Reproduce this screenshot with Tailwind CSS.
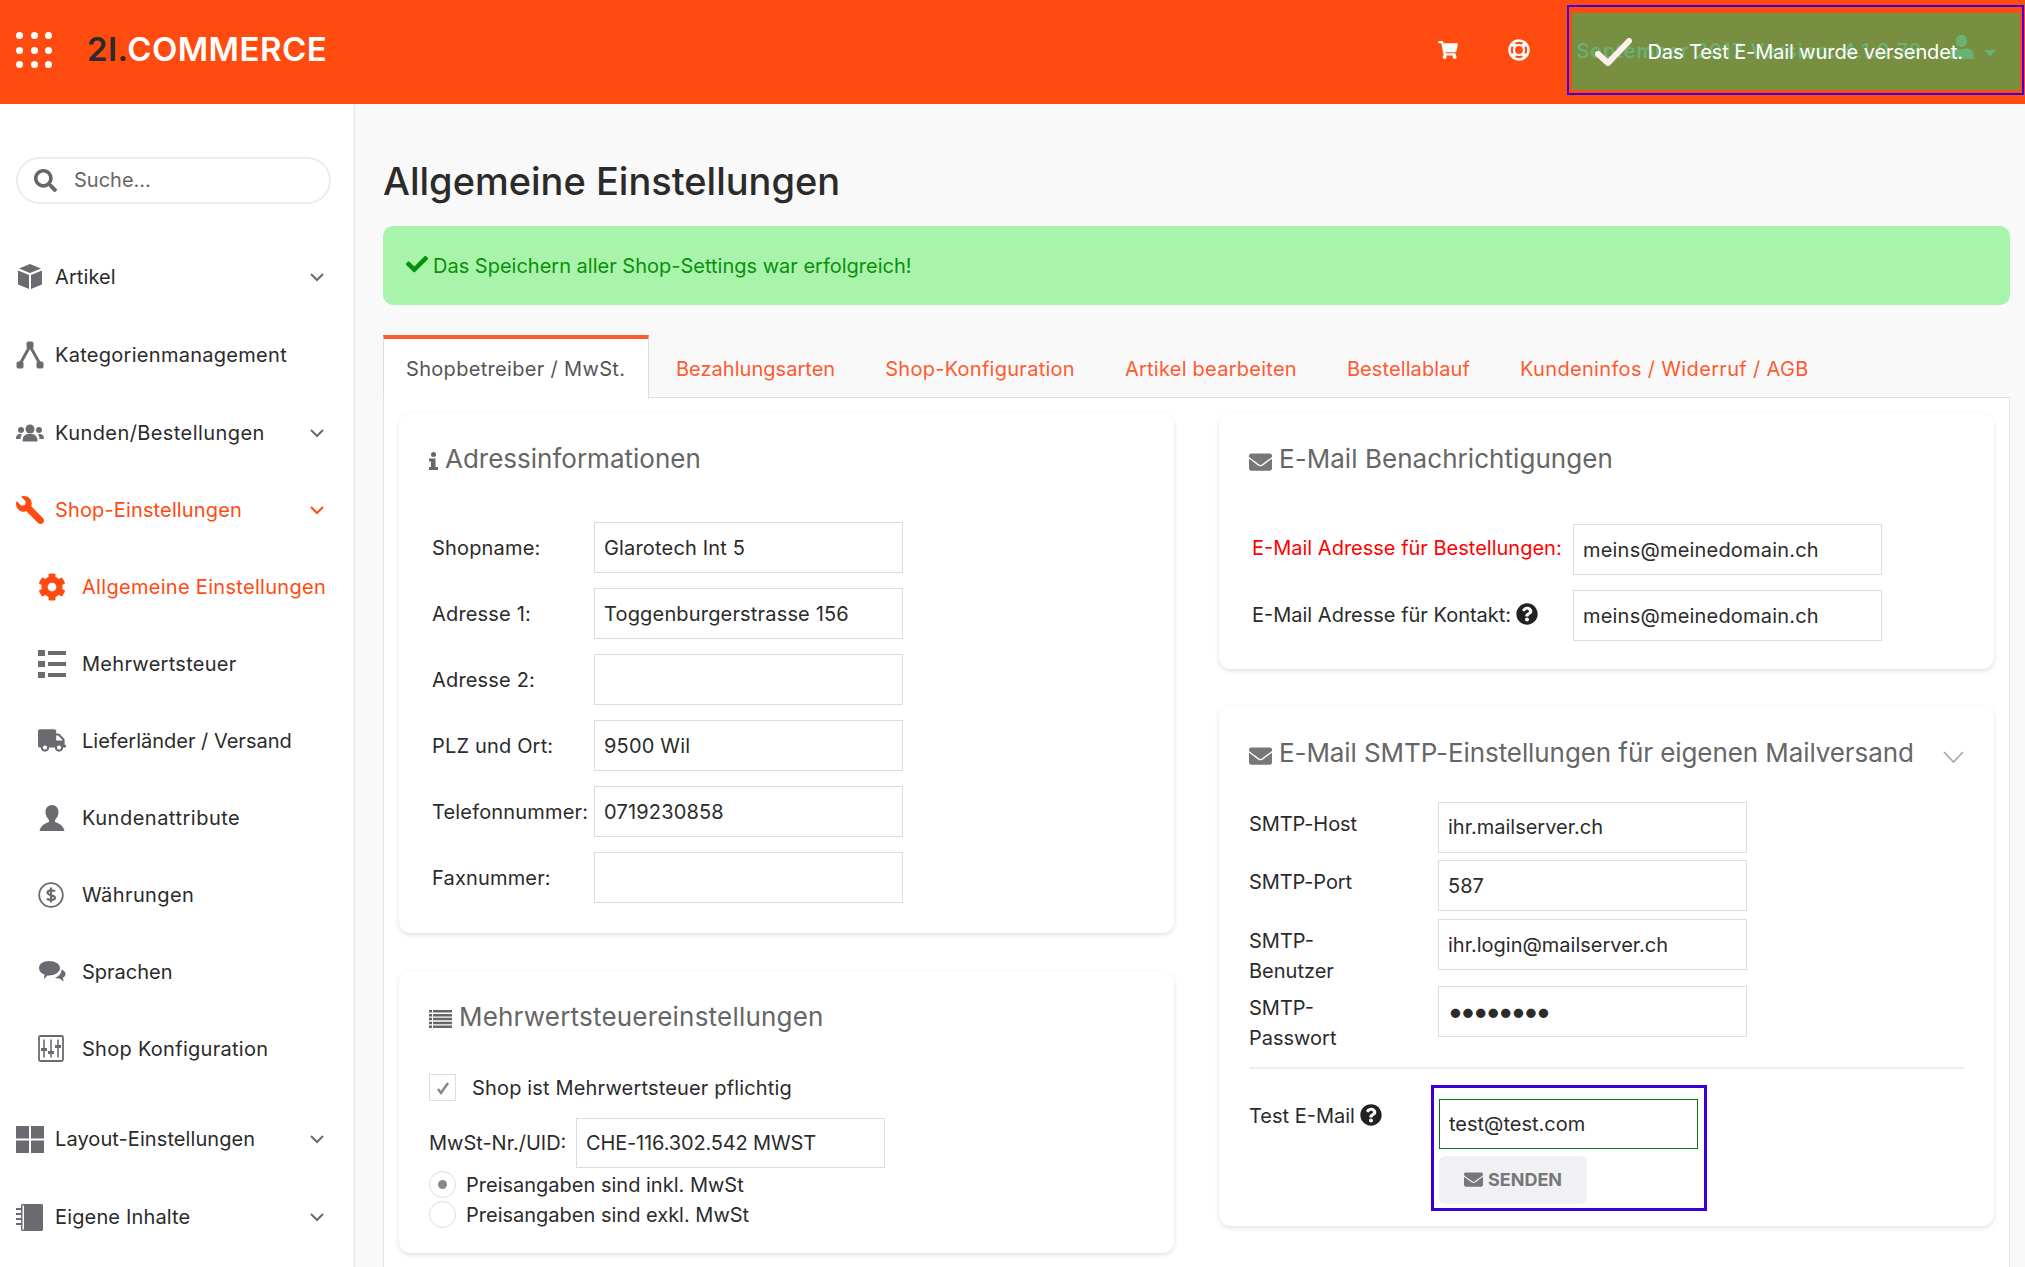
<!DOCTYPE html>
<html lang="de"><head><meta charset="utf-8"><script src="https://cdn.jsdelivr.net/npm/@tailwindcss/browser@4"></script><title>Allgemeine Einstellungen</title></head>
<body class="m-0 bg-[#f9f9f9] font-['Inter',sans-serif] text-[#2b2b2b] text-[20px]">
<div class="relative w-[2025px] h-[1267px] overflow-hidden flex flex-col">
 <header class="h-[104px] shrink-0 bg-[#ff4a10] flex items-center pb-[4px]">
  <div class="ml-[16px] w-[36px] grid grid-cols-3 gap-[7.5px]">
   <i class="block w-[7px] h-[7px] rounded-full bg-white"></i><i class="block w-[7px] h-[7px] rounded-full bg-white"></i><i class="block w-[7px] h-[7px] rounded-full bg-white"></i>
   <i class="block w-[7px] h-[7px] rounded-full bg-white"></i><i class="block w-[7px] h-[7px] rounded-full bg-white"></i><i class="block w-[7px] h-[7px] rounded-full bg-white"></i>
   <i class="block w-[7px] h-[7px] rounded-full bg-white"></i><i class="block w-[7px] h-[7px] rounded-full bg-white"></i><i class="block w-[7px] h-[7px] rounded-full bg-white"></i>
  </div>
  <div class="ml-[35px] w-[240px] whitespace-nowrap text-[33px] font-semibold tracking-[0.45px] text-white"><span class="text-[#2b2b2b]">2I.</span>COMMERCE</div>
  <svg class="ml-[1111px] w-[20px] h-[18px] fill-white" viewBox="0 0 576 512"><path d="M528.12 301.319l47.273-208C578.806 78.301 567.391 64 551.99 64H159.208l-9.166-44.81C147.758 8.021 137.93 0 126.529 0H24C10.745 0 0 10.745 0 24v16c0 13.255 10.745 24 24 24h69.883l70.248 343.435C147.325 417.1 136 435.222 136 456c0 30.928 25.072 56 56 56s56-25.072 56-56c0-15.674-6.447-29.835-16.824-40h209.647C430.447 426.165 424 440.326 424 456c0 30.928 25.072 56 56 56s56-25.072 56-56c0-22.172-12.888-41.332-31.579-50.405l5.517-24.276c3.413-15.018-8.002-29.319-23.403-29.319H218.117l-6.545-32h293.145c11.206 0 20.92-7.754 23.403-18.681z"/></svg>
  <svg class="ml-[50px] w-[22px] h-[22px]" viewBox="0 0 22 22" fill="none" stroke="#fff"><circle cx="11" cy="11" r="9.500" stroke-width="2.500"/><circle cx="11" cy="11" r="5" stroke-width="2.200"/><path stroke-width="4" d="M4.500 4.500 7.500 7.500M17.500 4.500 14.500 7.500M4.500 17.500 7.500 14.500M17.500 17.500 14.500 14.500"/></svg>
 </header>

 <!-- toast over the header -->
 <div class="absolute left-[1567px] top-[5px] w-[457px] h-[90px] border-[2.5px] border-[#3a00e0] pt-[6px] pb-[3px] pl-[2.500px] pr-[2px]">
  <div class="relative h-full bg-[#788f42] flex items-center">
   <span class="absolute left-[5px] top-[23px] text-[#69b275] font-medium text-[20px] whitespace-nowrap tracking-[0.9px]">September 2017 Version: 4.1.0.78</span>
   <svg class="absolute left-[376px] top-[22px] w-[27px] h-[24px] fill-[#69b275]" viewBox="0 0 448 448"><path d="M224 224c60 0 104-50 104-112S284 0 224 0 120 50 120 112s44 112 104 112zm90 28h-17c-22 10-47 16-73 16s-51-6-73-16h-17C60 252 0 300 0 370v78h448v-78c0-70-60-118-134-118z"/></svg>
   <svg class="absolute left-[412px] top-[37px] w-[12px] h-[6px] fill-[#69b275]" viewBox="0 0 12 6"><path d="M0 0h12L6 6z"/></svg>
   <svg class="relative ml-[23px] w-[37px] h-[28px]" viewBox="0 0 37 28" fill="none" stroke="#fdf0ea" stroke-width="6" stroke-linecap="round" stroke-linejoin="round"><path d="M3 16l10 9L34 3"/></svg>
   <span class="relative ml-[16px] text-white whitespace-nowrap tracking-[-0.1px]">Das Test E-Mail wurde versendet.</span>
  </div>
 </div>

 <div class="flex flex-1 min-h-0">
  <aside class="w-[356px] shrink-0 bg-white border-r-[3px] border-[#f0f0f0] pt-[53px] pl-[16px]">
   <div class="w-[315px] h-[47px] rounded-full border-2 border-[#ececec] flex items-center pl-[16px] text-[#666]">
    <svg class="w-[23px] h-[23px] fill-[#666]" viewBox="0 0 512 512"><path d="M505 442.700L405.300 343c-4.500-4.500-10.600-7-17-7H372c27.600-35.300 44-79.700 44-128C416 93.100 322.900 0 208 0S0 93.100 0 208s93.100 208 208 208c48.300 0 92.700-16.400 128-44v16.300c0 6.400 2.500 12.500 7 17l99.700 99.700c9.400 9.400 24.600 9.400 33.900 0l28.300-28.300c9.400-9.400 9.400-24.600.1-34zM208 336c-70.700 0-128-57.200-128-128 0-70.700 57.200-128 128-128 70.700 0 128 57.200 128 128 0 70.700-57.200 128-128 128z"/></svg>
    <span class="ml-[17px] pb-[1px]">Suche...</span>
   </div>
   <nav class="mt-[34px] flex flex-col pr-[29px] tracking-[0.28px] whitespace-nowrap">
    <div class="h-[78px] flex items-center"><svg class="w-[28px] h-[28px] fill-[#6b6a70]" viewBox="0 0 28 28"><path d="M14 1l11 4.500L14 10 3 5.500zM2 7.500l11 4.500v14L2 21.500zM26 7.500 15 12v14l11-4.500z"/></svg><span class="ml-[11px] tracking-[0.1px]">Artikel</span><svg class="ml-auto w-[14px] h-[9px] stroke-[#6b6a70] fill-none stroke-[2]" viewBox="0 0 14 9"><path d="M1 1l6 6 6-6"/></svg></div>
    <div class="h-[78px] flex items-center"><svg class="w-[28px] h-[28px] fill-[#6b6a70] stroke-[#6b6a70]" viewBox="0 0 28 28"><path fill="none" stroke-width="3" d="M4 23 14 5l10 18"/><rect x="11" y="1" width="6" height="6" rx="1"/><rect x="1" y="21" width="6" height="6" rx="1"/><rect x="21" y="21" width="6" height="6" rx="1"/></svg><span class="ml-[11px]">Kategorienmanagement</span></div>
    <div class="h-[78px] flex items-center"><svg class="w-[28px] h-[18px] fill-[#6b6a70]" viewBox="0 0 28 18"><circle cx="14" cy="5" r="4.500"/><path d="M6.500 17.500c0-6 3-7.500 7.500-7.500s7.500 1.500 7.500 7.500z"/><circle cx="5" cy="6" r="3"/><circle cx="23" cy="6" r="3"/><path d="M0 15c0-4 2-5 5-5l1 .5c-1 1-1.500 2.500-1.500 4.500zM28 15c0-4-2-5-5-5l-1 .5c1 1 1.500 2.500 1.500 4.500z"/></svg><span class="ml-[11px] tracking-[0.42px]">Kunden/Bestellungen</span><svg class="ml-auto w-[14px] h-[9px] stroke-[#6b6a70] fill-none stroke-[2]" viewBox="0 0 14 9"><path d="M1 1l6 6 6-6"/></svg></div>
    <div class="h-[76px] flex items-center text-[#ff4a10]"><svg class="w-[28px] h-[28px] fill-[#ff4a10] -scale-x-100" viewBox="0 0 512 512"><path d="M507.730 109.100c-2.240-9.030-13.540-12.090-20.120-5.510l-74.360 74.360-67.880-11.310-11.310-67.880 74.360-74.360c6.620-6.620 3.430-17.900-5.660-20.160-47.380-11.740-99.550.91-136.580 37.930-39.640 39.640-50.550 97.100-34.050 147.200L18.740 402.760c-24.990 24.990-24.990 65.510 0 90.500 24.990 24.990 65.510 24.990 90.500 0l213.210-213.210c50.120 16.710 107.470 5.680 147.370-34.220 37.070-37.070 49.700-89.320 37.910-136.730z"/></svg><span class="ml-[11px] tracking-[0.14px]">Shop-Einstellungen</span><svg class="ml-auto w-[14px] h-[9px] stroke-[#ff4a10] fill-none stroke-[2]" viewBox="0 0 14 9"><path d="M1 1l6 6 6-6"/></svg></div>
    <div class="h-[77px] flex items-center pl-[22px] text-[#ff4a10]"><svg class="shrink-0 w-[28px] h-[28px] fill-[#ff4a10]" viewBox="0 0 512 512"><path d="M487.400 315.700l-42.600-24.600c4.300-23.200 4.300-47 0-70.200l42.600-24.600c4.900-2.800 7.100-8.600 5.500-14-11.100-35.600-30-67.800-54.700-94.600-3.800-4.100-10-5.100-14.800-2.300L380.800 110c-17.900-15.400-38.500-27.300-60.800-35.100V25.800c0-5.600-3.900-10.500-9.400-11.700-36.700-8.200-74.300-7.800-109.200 0-5.500 1.200-9.400 6.100-9.400 11.700V75c-22.200 7.900-42.800 19.800-60.800 35.100L88.700 85.500c-4.900-2.800-11-1.900-14.800 2.300-24.700 26.700-43.600 58.900-54.700 94.600-1.700 5.400.6 11.200 5.500 14L67.300 221c-4.300 23.200-4.300 47 0 70.200l-42.600 24.600c-4.900 2.800-7.100 8.600-5.500 14 11.100 35.600 30 67.800 54.700 94.600 3.800 4.100 10 5.100 14.800 2.300l42.600-24.600c17.900 15.400 38.500 27.300 60.800 35.100v49.200c0 5.600 3.900 10.500 9.400 11.700 36.700 8.200 74.300 7.800 109.200 0 5.500-1.200 9.400-6.100 9.400-11.700v-49.200c22.200-7.900 42.800-19.800 60.800-35.100l42.600 24.600c4.900 2.800 11 1.900 14.800-2.300 24.700-26.700 43.600-58.900 54.700-94.600 1.500-5.500-.7-11.300-5.600-14.100zM256 336c-44.100 0-80-35.900-80-80s35.900-80 80-80 80 35.900 80 80-35.900 80-80 80z"/></svg><span class="ml-[16px] tracking-[0.3px]">Allgemeine Einstellungen</span></div>
    <div class="h-[77px] flex items-center pl-[22px]"><svg class="w-[28px] h-[28px] fill-[#6b6a70]" viewBox="0 0 28 28"><path d="M0 0h7v6H0zM10 1h18v4H10zM0 11h7v6H0zM10 12h18v4H10zM0 22h7v6H0zM10 23h18v4H10z"/></svg><span class="ml-[16px]">Mehrwertsteuer</span></div>
    <div class="h-[77px] flex items-center pl-[22px]"><svg class="w-[28px] h-[23px] fill-[#6b6a70]" viewBox="0 0 640 512"><path d="M624 352h-16V243.900c0-12.700-5.100-24.900-14.100-33.900L494 110.100c-9-9-21.200-14.100-33.900-14.100H416V48c0-26.500-21.500-48-48-48H48C21.500 0 0 21.500 0 48v320c0 26.500 21.500 48 48 48h16c0 53 43 96 96 96s96-43 96-96h128c0 53 43 96 96 96s96-43 96-96h48c8.800 0 16-7.200 16-16v-32c0-8.800-7.200-16-16-16zM160 464c-26.500 0-48-21.500-48-48s21.500-48 48-48 48 21.500 48 48-21.500 48-48 48zm320 0c-26.500 0-48-21.500-48-48s21.500-48 48-48 48 21.500 48 48-21.500 48-48 48zm80-208H416V144h44.100l99.900 99.900V256z"/></svg><span class="ml-[16px] tracking-[0px]">Lieferländer / Versand</span></div>
    <div class="h-[77px] flex items-center pl-[22px]"><svg class="w-[28px] h-[26px] fill-[#6b6a70]" viewBox="0 0 28 26"><path d="M14 0c-4 0-6.500 3-6.500 7 0 3 1.500 6 3.500 8v2c-4 1.500-8 3-9.500 9h25c-1.500-6-5.500-7.500-9.500-9v-2c2-2 3.500-5 3.500-8 0-4-2.500-7-6.500-7z"/></svg><span class="ml-[16px] tracking-[0.5px]">Kundenattribute</span></div>
    <div class="h-[77px] flex items-center pl-[22px]"><svg class="w-[26px] h-[26px] mr-[2px] stroke-[#6b6a70] fill-none" viewBox="0 0 26 26"><circle cx="13" cy="13" r="11.800" stroke-width="1.800"/><path stroke-width="2.200" d="M17 9.500c-1-1.500-7-2-7.500 1 -.5 3.500 8 2 7.500 5.500-.5 2.500-6.500 2.500-8 .5M13 5.500v15"/></svg><span class="ml-[16px] tracking-[0.4px]">Währungen</span></div>
    <div class="h-[77px] flex items-center pl-[22px]"><svg class="w-[28px] h-[21px] fill-[#6b6a70]" viewBox="0 0 28 21"><path d="M11 0c6 0 11 3 11 7s-5 7.500-11 7.500h-1.500L6 18l.5-4.500C3 12.500 1 10 1 7c0-4 4-7 10-7z"/><path d="M23.500 8.500c2.500 1 4 2.500 4 4.500 0 1.500-1 3-2.500 3.500l.5 4-4-3h-1c-1.500 0-2.500-.3-3.500-1 4-1 6.500-4 6.500-8z"/></svg><span class="ml-[16px] tracking-[0px]">Sprachen</span></div>
    <div class="h-[77px] flex items-center pl-[22px]"><svg class="w-[26px] h-[27px] mr-[2px] fill-[#6b6a70] stroke-[#6b6a70]" viewBox="0 0 26 27"><rect x="1" y="1" width="24" height="25" rx="1.500" fill="none" stroke-width="1.800"/><path stroke-width="1.600" d="M6 4.500v18M13 4.500v18M20 4.500v18"/><path stroke="none" d="M3 13h6v3H3zM10 16h6v3h-6zM17 10h6v3h-6z"/></svg><span class="ml-[16px]">Shop Konfiguration</span></div>
    <div class="h-[78px] mt-[13px] flex items-center"><svg class="w-[28px] h-[27px] fill-[#6b6a70]" viewBox="0 0 28 27"><path d="M0 0h13v12.500H0zM15 0h13v12.500H15zM0 14.500h13V27H0zM15 14.500h13V27H15z"/></svg><span class="ml-[11px] tracking-[0.08px]">Layout-Einstellungen</span><svg class="ml-auto w-[14px] h-[9px] stroke-[#6b6a70] fill-none stroke-[2]" viewBox="0 0 14 9"><path d="M1 1l6 6 6-6"/></svg></div>
    <div class="h-[78px] flex items-center"><svg class="w-[28px] h-[27px] fill-[#6b6a70]" viewBox="0 0 28 27"><path d="M5 1.500C5 .7 5.700 0 6.500 0h19C26.300 0 27 .7 27 1.500v24c0 .8-.7 1.500-1.500 1.500h-19C5.700 27 5 26.300 5 25.500z"/><path d="M0 4h6v2H0zM0 9h6v2H0zM0 14h6v2H0zM0 19h6v2H0z"/><path fill="#fff" d="M6.500 1.500h1.500v24H6.500z"/></svg><span class="ml-[11px] tracking-[0.15px]">Eigene Inhalte</span><svg class="ml-auto w-[14px] h-[9px] stroke-[#6b6a70] fill-none stroke-[2]" viewBox="0 0 14 9"><path d="M1 1l6 6 6-6"/></svg></div>
   </nav>
  </aside>

  <main class="flex-1 min-w-0 pl-[27px] pr-[15px]">
   <h1 class="mt-[50px] text-[38px] leading-[54px] font-[550] tracking-[0px]">Allgemeine Einstellungen</h1>
   <div class="mt-[18px] h-[79px] bg-[#a8f4aa] rounded-[10px] text-[#0a8f0a] flex items-center pl-[23px]">
    <svg class="w-[22px] h-[19px] fill-[#0a8f0a] mb-[2px]" viewBox="0 0 512 440"><path d="M173.898 395.404l-166.400-166.400c-9.997-9.997-9.997-26.206 0-36.204l36.203-36.204c9.997-9.998 26.207-9.998 36.204 0L192 268.690 432.095 28.596c9.997-9.997 26.207-9.997 36.204 0l36.203 36.204c9.997 9.997 9.997 26.206 0 36.204l-294.400 294.401c-9.998 9.997-26.207 9.997-36.204-.001z"/></svg>
    <span class="ml-[5px]">Das Speichern aller Shop-Settings war erfolgreich!</span>
   </div>

   <div class="mt-[30px] h-[63px] flex border-b-[1.500px] border-[#dfdfdf] text-[#ff5a30]">
    <div class="h-[64px] w-[266px] mr-[2px] pl-[22px] bg-white border-t-[4px] border-x-[1.500px] border-t-[#ff5a2a] border-x-[#dfdfdf] text-[#555] flex items-center tracking-[0.32px] whitespace-nowrap">Shopbetreiber / MwSt.</div>
    <div class="px-[25px] pt-[5px] flex items-center tracking-[0.03px]">Bezahlungsarten</div>
    <div class="px-[25px] pt-[5px] flex items-center tracking-[0.27px]">Shop-Konfiguration</div>
    <div class="px-[25px] pt-[5px] flex items-center tracking-[0.25px]">Artikel bearbeiten</div>
    <div class="px-[25px] pt-[5px] flex items-center tracking-[0.1px]">Bestellablauf</div>
    <div class="px-[25px] pt-[5px] flex items-center tracking-[0.34px]">Kundeninfos / Widerruf / AGB</div>
   </div>

   <div class="h-[900px] bg-white border-x-[1.500px] border-[#e6e6e6] px-[15px] pt-[15px] grid grid-cols-[775px_775px] gap-x-[45px] items-start">
    <!-- left column -->
    <div class="flex flex-col gap-[38px]">
     <section class="h-[520px] rounded-[12px] bg-white shadow-[0_2px_5px_rgba(0,0,0,0.12)] pt-[28px] pl-[30px]">
      <h2 class="flex items-center text-[26px] leading-[36px] text-[#666]"><svg class="w-[9px] h-[18px] fill-[#666] mt-[3px]" viewBox="0 0 9 18"><circle cx="4.500" cy="2.500" r="2.500"/><path d="M0 6.500h6.500V15H9v3H0v-3h2V9.500H0z"/></svg><span class="ml-[7px]">Adressinformationen</span></h2>
      <div class="mt-[45px] pl-[3px] flex flex-col gap-[15px] tracking-[0.17px]">
       <label class="flex items-center"><span class="w-[162px]">Shopname:</span><input class="w-[309px] h-[51px] border-[1.500px] border-[#ddd] px-[9px] text-[#2b2b2b]" value="Glarotech Int 5"></label>
       <label class="flex items-center"><span class="w-[162px]">Adresse 1:</span><input class="w-[309px] h-[51px] border-[1.500px] border-[#ddd] px-[9px] text-[#2b2b2b]" value="Toggenburgerstrasse 156"></label>
       <label class="flex items-center"><span class="w-[162px]">Adresse 2:</span><input class="w-[309px] h-[51px] border-[1.500px] border-[#ddd] px-[9px] text-[#2b2b2b]" value=""></label>
       <label class="flex items-center"><span class="w-[162px]">PLZ und Ort:</span><input class="w-[309px] h-[51px] border-[1.500px] border-[#ddd] px-[9px] text-[#2b2b2b]" value="9500 Wil"></label>
       <label class="flex items-center"><span class="w-[162px]">Telefonnummer:</span><input class="w-[309px] h-[51px] border-[1.500px] border-[#ddd] px-[9px] text-[#2b2b2b]" value="0719230858"></label>
       <label class="flex items-center"><span class="w-[162px]">Faxnummer:</span><input class="w-[309px] h-[51px] border-[1.500px] border-[#ddd] px-[9px] text-[#2b2b2b]" value=""></label>
      </div>
     </section>
     <section class="h-[282px] rounded-[12px] bg-white shadow-[0_2px_5px_rgba(0,0,0,0.12)] pt-[28px] pl-[30px]">
      <h2 class="flex items-center text-[26px] leading-[36px] text-[#666]"><svg class="w-[23px] h-[18px] fill-[#666] mt-[3px]" viewBox="0 0 23 18"><path d="M0 0h3v2.500H0zM4 0h19v2.500H4zM0 3.900h3v2.500H0zM4 3.900h19v2.500H4zM0 7.800h3v2.500H0zM4 7.800h19v2.500H4zM0 11.700h3v2.500H0zM4 11.700h19v2.500H4zM0 15.500h3V18H0zM4 15.500h19V18H4z"/></svg><span class="ml-[7px] tracking-[0.2px]">Mehrwertsteuereinstellungen</span></h2>
      <div class="mt-[39px] h-[27px] flex items-center"><span class="w-[27px] h-[27px] border-[1.500px] border-[#ddd] flex items-center justify-center"><svg class="w-[14px] h-[14px] fill-none stroke-[#888] stroke-[2.500]" viewBox="0 0 14 14"><path d="M2 8l3 4 7-10"/></svg></span><span class="ml-[16px] tracking-[0.16px]">Shop ist Mehrwertsteuer pflichtig</span></div>
      <label class="mt-[17px] flex items-center"><span class="w-[147px]">MwSt-Nr./UID:</span><input class="w-[309px] h-[50px] border-[1.500px] border-[#ddd] px-[9px] text-[#2b2b2b] tracking-[-0.15px]" value="CHE-116.302.542 MWST"></label>
      <div class="mt-[3px] h-[27px] flex items-center"><span class="w-[27px] h-[27px] rounded-full border-[1.500px] border-[#ddd] flex items-center justify-center"><i class="block w-[9px] h-[9px] rounded-full bg-[#888]"></i></span><span class="ml-[10px]">Preisangaben sind inkl. MwSt</span></div>
      <div class="mt-[3px] h-[27px] flex items-center"><span class="w-[27px] h-[27px] rounded-full border-[1.500px] border-[#ddd]"></span><span class="ml-[10px]">Preisangaben sind exkl. MwSt</span></div>
     </section>
    </div>
    <!-- right column -->
    <div class="flex flex-col gap-[37px]">
     <section class="h-[256px] rounded-[12px] bg-white shadow-[0_2px_5px_rgba(0,0,0,0.12)] pt-[28px] pl-[30px]">
      <h2 class="flex items-center text-[26px] leading-[36px] text-[#666]"><svg class="w-[23px] h-[20px] fill-[#777] mt-[6px]" viewBox="0 0 512 384"><path d="M502.300 126.800c3.900-3.100 9.700-.2 9.700 4.700V336c0 26.500-21.500 48-48 48H48c-26.500 0-48-21.500-48-48V131.600c0-5 5.700-7.800 9.700-4.700 22.400 17.400 52.100 39.500 154.100 113.600 21.100 15.400 56.700 47.800 92.200 47.600 35.700.3 72-32.800 92.300-47.600 102-74.100 131.600-96.300 154-113.700zM256 256c23.200.4 56.600-29.200 73.400-41.400 132.700-96.300 142.800-104.700 173.400-128.700 5.800-4.500 9.200-11.500 9.200-18.900V48c0-26.500-21.500-48-48-48H48C21.500 0 0 21.500 0 48v19c0 7.400 3.400 14.300 9.200 18.900 30.600 23.900 40.700 32.400 173.400 128.700 16.800 12.200 50.200 41.800 73.400 41.400z"/></svg><span class="ml-[7px] tracking-[0.05px]">E-Mail Benachrichtigungen</span></h2>
      <div class="mt-[47px] pl-[3px] flex flex-col gap-[15px]">
       <label class="flex items-center"><span class="w-[321px] text-[#f00] pb-[4px]">E-Mail Adresse für Bestellungen:</span><input class="w-[309px] h-[51px] border-[1.500px] border-[#ddd] px-[9px] text-[#2b2b2b] tracking-[0.2px]" value="meins@meinedomain.ch"></label>
       <label class="flex items-center"><span class="w-[321px] flex items-center pb-[2px]">E-Mail Adresse für Kontakt:<svg class="ml-[5px] w-[22px] h-[22px] fill-[#222] mb-[2px]" viewBox="0 0 512 512"><path d="M504 256c0 136.997-111.043 248-248 248S8 392.997 8 256C8 119.083 119.043 8 256 8s248 111.083 248 248zM262.655 90c-54.497 0-89.255 22.957-116.549 63.758-3.536 5.286-2.353 12.415 2.715 16.258l34.699 26.310c5.205 3.947 12.621 3.008 16.665-2.122 17.864-22.658 30.113-35.797 57.303-35.797 20.429 0 45.698 13.148 45.698 32.958 0 14.976-12.363 22.667-32.534 33.976C247.128 238.528 216 254.941 216 296v4c0 6.627 5.373 12 12 12h56c6.627 0 12-5.373 12-12v-1.333c0-28.462 83.186-29.647 83.186-106.667 0-58.002-60.165-102-116.531-102zM256 338c-25.365 0-46 20.635-46 46 0 25.364 20.635 46 46 46s46-20.636 46-46c0-25.365-20.635-46-46-46z"/></svg></span><input class="w-[309px] h-[51px] border-[1.500px] border-[#ddd] px-[9px] text-[#2b2b2b] tracking-[0.2px]" value="meins@meinedomain.ch"></label>
      </div>
     </section>
     <section class="h-[520px] rounded-[12px] bg-white shadow-[0_2px_5px_rgba(0,0,0,0.12)] pt-[29px] pl-[30px] pr-[30px]">
      <h2 class="flex items-center text-[26px] leading-[36px] text-[#666]"><svg class="w-[23px] h-[20px] fill-[#777] mt-[6px]" viewBox="0 0 512 384"><path d="M502.300 126.800c3.900-3.100 9.700-.2 9.700 4.700V336c0 26.500-21.500 48-48 48H48c-26.500 0-48-21.500-48-48V131.600c0-5 5.700-7.800 9.700-4.700 22.400 17.400 52.100 39.500 154.100 113.600 21.100 15.400 56.700 47.800 92.200 47.600 35.700.3 72-32.800 92.300-47.600 102-74.100 131.600-96.300 154-113.700zM256 256c23.200.4 56.600-29.200 73.400-41.400 132.700-96.300 142.800-104.700 173.400-128.700 5.800-4.500 9.200-11.500 9.200-18.900V48c0-26.500-21.500-48-48-48H48C21.500 0 0 21.500 0 48v19c0 7.400 3.400 14.300 9.200 18.900 30.600 23.900 40.700 32.400 173.400 128.700 16.800 12.200 50.200 41.800 73.400 41.400z"/></svg><span class="ml-[7px] whitespace-nowrap tracking-[-0.08px]">E-Mail SMTP-Einstellungen für eigenen Mailversand</span><svg class="ml-auto mt-[8px] w-[21px] h-[12px] fill-none stroke-[#aaa] stroke-[1.800]" viewBox="0 0 21 12"><path d="M1 1l9.500 10L20 1"/></svg></h2>
      <div class="mt-[31px]">
       <label class="flex items-start"><span class="w-[189px] pt-[7px] leading-[30px] tracking-[-0.1px]">SMTP-Host</span><input class="w-[309px] h-[51px] border-[1.500px] border-[#ddd] px-[9px] pb-[2px] text-[#2b2b2b]" value="ihr.mailserver.ch"></label>
       <label class="mt-[7px] flex items-start"><span class="w-[189px] pt-[7px] leading-[30px] tracking-[-0.1px]">SMTP-Port</span><input class="w-[309px] h-[51px] border-[1.500px] border-[#ddd] px-[9px] text-[#2b2b2b]" value="587"></label>
       <label class="mt-[8px] flex items-start"><span class="w-[189px] pt-[7px] leading-[30px]">SMTP-<br>Benutzer</span><input class="w-[309px] h-[51px] border-[1.500px] border-[#ddd] px-[9px] text-[#2b2b2b]" value="ihr.login@mailserver.ch"></label>
       <label class="flex items-start"><span class="w-[189px] pt-[7px] leading-[30px]">SMTP-<br>Passwort</span><input type="password" class="w-[309px] h-[51px] border-[1.500px] border-[#ddd] pl-[8px] pr-[9px] pb-[2px] text-[#2b2b2b] text-[30px] tracking-[-4.3px]" value="12345678"></label>
      </div>
      <div class="mt-[14px] h-[1.500px] bg-[#eee]"></div>
      <div class="mt-[16px] flex items-start">
       <div class="w-[182px] pt-[16px] flex items-center">Test E-Mail<svg class="ml-[5px] w-[22px] h-[22px] fill-[#222] mb-[2px]" viewBox="0 0 512 512"><path d="M504 256c0 136.997-111.043 248-248 248S8 392.997 8 256C8 119.083 119.043 8 256 8s248 111.083 248 248zM262.655 90c-54.497 0-89.255 22.957-116.549 63.758-3.536 5.286-2.353 12.415 2.715 16.258l34.699 26.310c5.205 3.947 12.621 3.008 16.665-2.122 17.864-22.658 30.113-35.797 57.303-35.797 20.429 0 45.698 13.148 45.698 32.958 0 14.976-12.363 22.667-32.534 33.976C247.128 238.528 216 254.941 216 296v4c0 6.627 5.373 12 12 12h56c6.627 0 12-5.373 12-12v-1.333c0-28.462 83.186-29.647 83.186-106.667 0-58.002-60.165-102-116.531-102zM256 338c-25.365 0-46 20.635-46 46 0 25.364 20.635 46 46 46s46-20.636 46-46c0-25.365-20.635-46-46-46z"/></svg></div>
       <div class="w-[276px] h-[126px] border-[3px] border-[#3a00d8] pl-[5px] pt-[11px]">
        <input class="w-[259px] h-[50px] border-[1.500px] border-[#0a7a0a] px-[9px] text-[#2b2b2b]" value="test@test.com">
        <button class="mt-[7px] w-[148px] h-[48px] rounded-[6px] bg-[#f0f0f5] text-[#777] text-[18px] font-bold flex items-center justify-center"><svg class="w-[19px] h-[15px] fill-[#777]" viewBox="0 0 512 384"><path d="M502.300 126.800c3.900-3.100 9.700-.2 9.700 4.700V336c0 26.500-21.500 48-48 48H48c-26.500 0-48-21.500-48-48V131.600c0-5 5.700-7.800 9.700-4.700 22.400 17.400 52.100 39.500 154.100 113.600 21.100 15.400 56.700 47.800 92.200 47.600 35.700.3 72-32.800 92.300-47.600 102-74.100 131.600-96.300 154-113.700zM256 256c23.200.4 56.600-29.200 73.400-41.400 132.700-96.300 142.800-104.700 173.400-128.700 5.800-4.500 9.200-11.500 9.200-18.900V48c0-26.500-21.500-48-48-48H48C21.500 0 0 21.500 0 48v19c0 7.400 3.400 14.300 9.200 18.900 30.600 23.900 40.700 32.400 173.400 128.700 16.800 12.200 50.200 41.800 73.400 41.400z"/></svg><span class="ml-[5px]">SENDEN</span></button>
       </div>
      </div>
     </section>
    </div>
   </div>
  </main>
 </div>
</div>
</body></html>
